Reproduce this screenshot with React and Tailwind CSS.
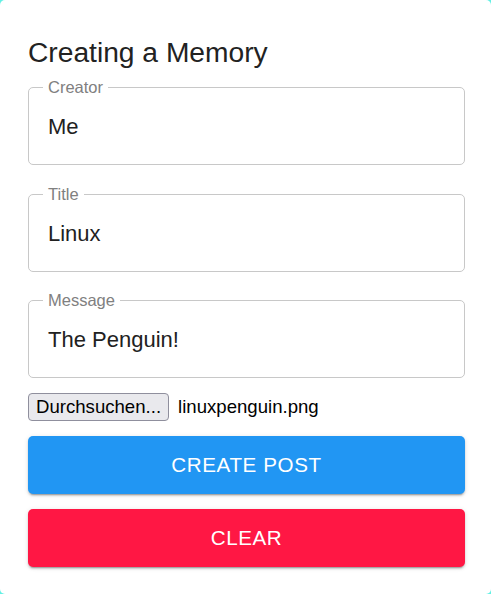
export default function App() {
  const fields = [
    { label: "Creator", value: "Me", mt: "mt-[13px]" },
    { label: "Title", value: "Linux", mt: "mt-[29px]" },
    { label: "Message", value: "The Penguin!", mt: "mt-[28px]" },
  ];
  return (
    <div
      className="w-[491px] h-[594px] bg-[#62f0e4]"
      style={{ fontFamily: '"Liberation Sans", Arial, sans-serif' }}
    >
      <div className="w-full h-full bg-white rounded-[5px] pl-[28px] pr-[26px] pt-[30px] flex flex-col">
        <h2 className="text-[28.2px] leading-[44px] text-[#222222] font-normal">
          Creating a Memory
        </h2>
        <div className="flex flex-col">
          {fields.map((f) => (
            <div
              key={f.label}
              className={`${f.mt} relative h-[78px] border border-[#c8c8c8] rounded-[5px] flex items-center pl-[19px]`}
            >
              <span className="absolute left-[14px] top-[-11px] bg-white px-[5px] text-[16.5px] leading-[20px] text-[#808080]">
                {f.label}
              </span>
              <span className="text-[22px] text-[#212121]">{f.value}</span>
            </div>
          ))}
        </div>
        <div className="flex items-center mt-[15px] h-[28px]">
          <div className="h-[28px] px-[7px] flex items-center bg-[#e9e9ed] border border-[#8f8f9d] rounded-[4px] text-[18.6px] text-black">
            Durchsuchen...
          </div>
          <span className="ml-[9px] text-[18.6px] text-black">linuxpenguin.png</span>
        </div>
        <div className="mt-[15px] h-[58px] rounded-[5px] bg-[#2196f3] text-white flex items-center justify-center text-[20.6px] tracking-[0.6px] uppercase shadow-[0_3px_1px_-2px_rgba(0,0,0,0.2),0_2px_2px_0_rgba(0,0,0,0.14),0_1px_5px_0_rgba(0,0,0,0.12)]">
          Create Post
        </div>
        <div className="mt-[15px] h-[58px] rounded-[5px] bg-[#ff1744] text-white flex items-center justify-center text-[20.6px] tracking-[0.6px] uppercase shadow-[0_3px_1px_-2px_rgba(0,0,0,0.2),0_2px_2px_0_rgba(0,0,0,0.14),0_1px_5px_0_rgba(0,0,0,0.12)]">
          Clear
        </div>
      </div>
    </div>
  );
}
